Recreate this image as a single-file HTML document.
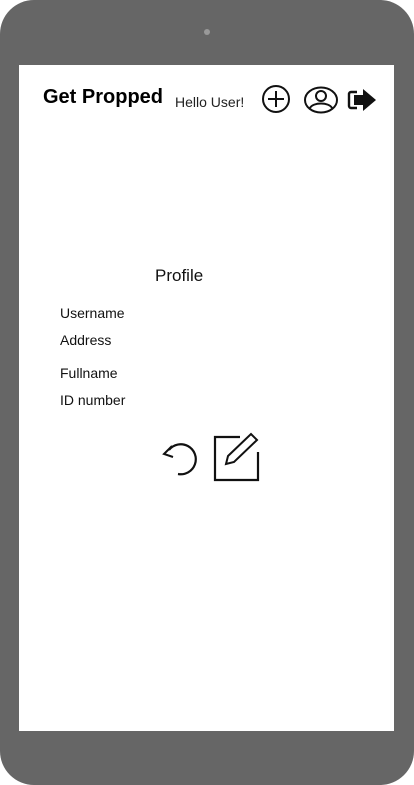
<!DOCTYPE html>
<html><head><style>
body{margin:0;width:414px;height:785px;background:#fff;font-family:"Liberation Sans",sans-serif;overflow:hidden;position:relative}
.frame{position:absolute;left:0;top:0;width:414px;height:785px;background:#666;border-radius:34px}
.screen{position:absolute;left:19px;top:65px;width:375px;height:666px;background:#fff}
.cam{position:absolute;left:204px;top:29px;width:6px;height:6px;border-radius:50%;background:#999}
.t{position:absolute;color:#111;white-space:nowrap}
</style></head><body>
<div class="frame"></div><div class="cam"></div>
<div class="screen"></div>
<div class="t" style="left:43px;top:86px;font-size:20px;font-weight:bold;color:#000">Get Propped</div>
<div class="t" style="left:175px;top:94px;font-size:14px;color:#222">Hello User!</div>
<svg style="position:absolute;left:0;top:0" width="414" height="785">
<g fill="none" stroke="#111" stroke-width="2">
<circle cx="276" cy="99" r="13"/><path d="M276 91v16M268 99h16"/>
<ellipse cx="321" cy="100" rx="16" ry="12.5"/>
<circle cx="321" cy="96" r="5"/><path d="M310 108c3-6 19-6 22 0"/>
<path d="M357 92h-6a2 2 0 0 0-2 2v12a2 2 0 0 0 2 2h6" stroke-width="2.4"/>
<path d="M169 450A15 15 0 1 1 178 474" stroke-width="2.2"/>
<path d="M172 446L164 454L173 457" stroke-width="2"/>
<path d="M240 437h-25v43h43v-28" stroke-width="2.2"/>
<path d="M228 456l23-22 6 6-23 22-8 2z" stroke-width="2"/>
</g>
<path d="M354 95h9v-6l13 11-13 11v-6h-9z" fill="#111"/>
</svg>
<div class="t" style="left:155px;top:266px;font-size:17px">Profile</div>
<div class="t" style="left:60px;top:305px;font-size:14px">Username</div>
<div class="t" style="left:60px;top:332px;font-size:14px">Address</div>
<div class="t" style="left:60px;top:365px;font-size:14px">Fullname</div>
<div class="t" style="left:60px;top:392px;font-size:14px">ID number</div>
</body></html>
